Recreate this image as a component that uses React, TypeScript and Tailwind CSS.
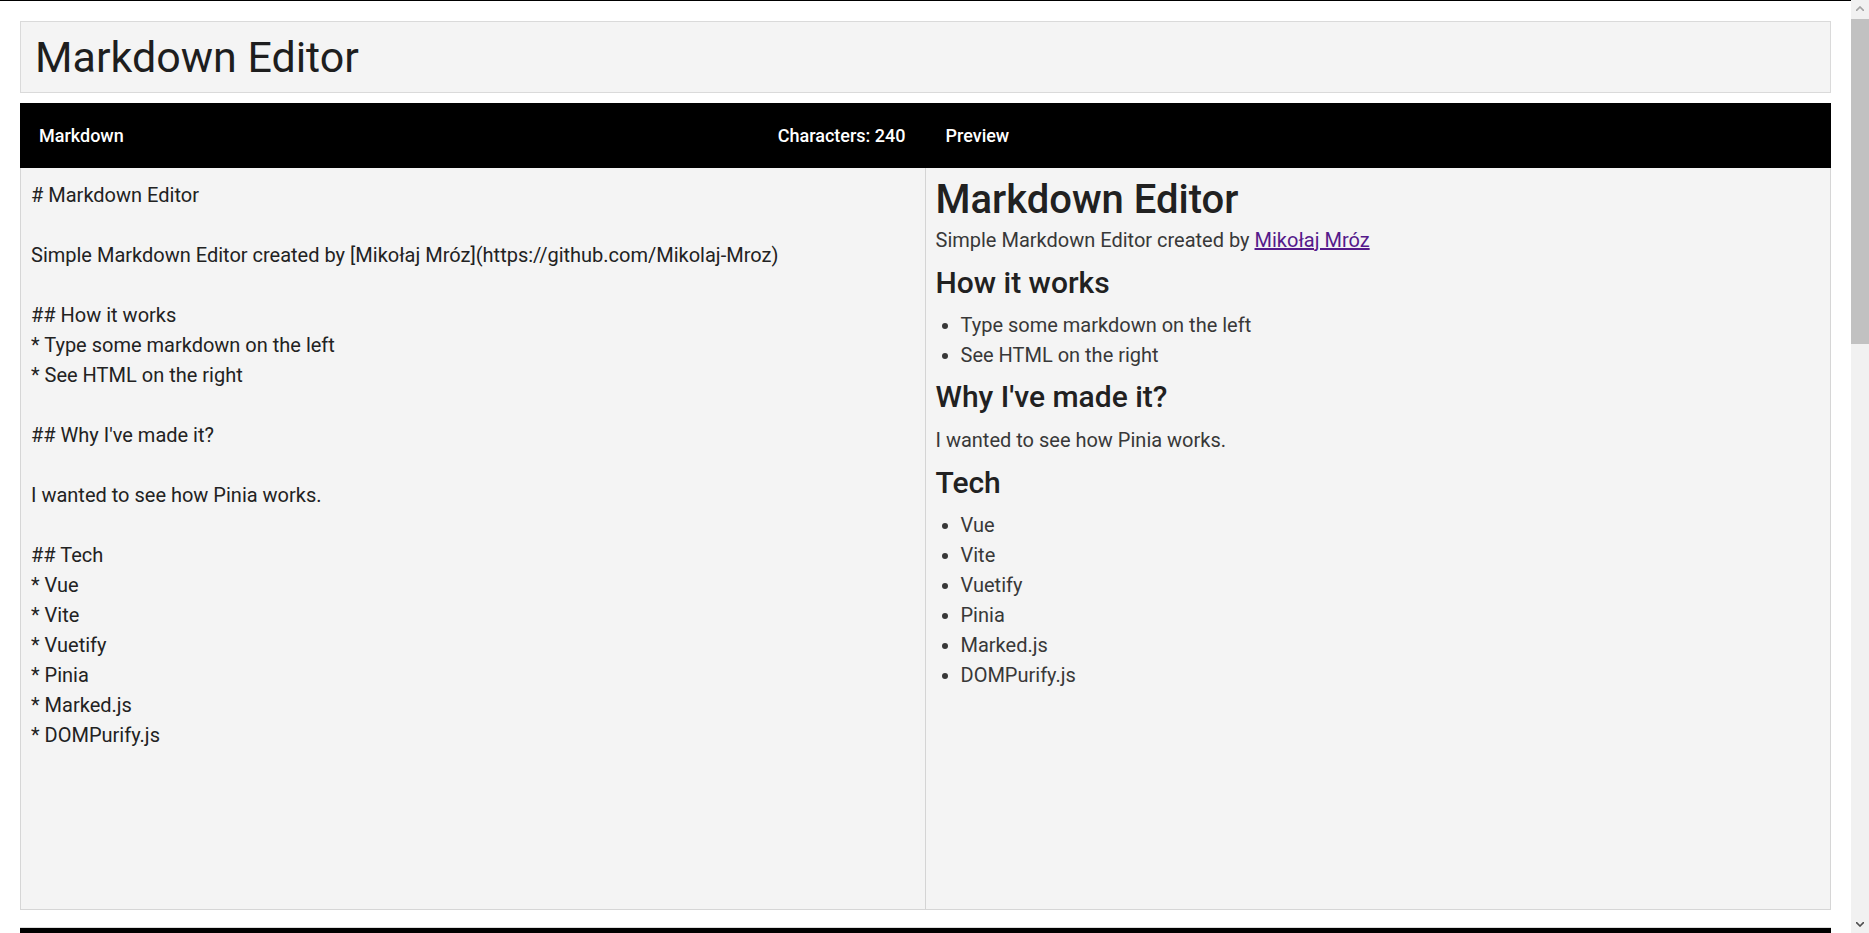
import React from 'react';

const source = `# Markdown Editor

Simple Markdown Editor created by [Mikołaj Mróz](https://github.com/Mikolaj-Mroz)

## How it works
* Type some markdown on the left
* See HTML on the right

## Why I've made it?

I wanted to see how Pinia works.

## Tech
* Vue
* Vite
* Vuetify
* Pinia
* Marked.js
* DOMPurify.js`;

const tech = ['Vue', 'Vite', 'Vuetify', 'Pinia', 'Marked.js', 'DOMPurify.js'];

const Preview: React.FC = () => (
  <div className="pl-[10px] pr-[10px] pt-[7px] text-[20px] leading-[30px] text-[#383838]">
    <h1 className="text-[40px] leading-[50px] font-medium text-[#212121]">Markdown Editor</h1>
    <p className="mb-[10px]">
      Simple Markdown Editor created by{' '}
      <a href="#" className="text-[#551a8b] underline">
        Mikołaj Mróz
      </a>
    </p>
    <h2 className="text-[30px] leading-[36px] font-medium text-[#212121] mb-[9px]">How it works</h2>
    <ul className="list-disc pl-[25px] mb-[9px]">
      <li>Type some markdown on the left</li>
      <li>See HTML on the right</li>
    </ul>
    <h2 className="text-[30px] leading-[36px] font-medium text-[#212121] mb-[10px]">Why I've made it?</h2>
    <p className="mb-[10px]">I wanted to see how Pinia works.</p>
    <h2 className="text-[30px] leading-[36px] font-medium text-[#212121] mb-[9px]">Tech</h2>
    <ul className="list-disc pl-[25px]">
      {tech.map((t) => (
        <li key={t}>{t}</li>
      ))}
    </ul>
  </div>
);

// page scrollbar, drawn since the browser hides its own
const Scrollbar: React.FC = () => (
  <div className="w-[18px] shrink-0 flex flex-col bg-[#f1f1f1]">
    <div className="h-[17px] flex items-center justify-center">
      <svg width="8" height="5" viewBox="0 0 8 5">
        <path d="M0 5 L4 1 L8 5" fill="none" stroke="#a3a3a3" strokeWidth="1.6" />
      </svg>
    </div>
    <div className="mt-[2px] h-[325px] bg-[#c1c1c1]" />
    <div className="flex-1" />
    <div className="h-[17px] flex items-center justify-center">
      <svg width="8" height="5" viewBox="0 0 8 5">
        <path d="M0 0 L4 4 L8 0" fill="none" stroke="#505050" strokeWidth="1.6" />
      </svg>
    </div>
  </div>
);

const App: React.FC = () => {
  return (
    <div className="h-[933px] flex overflow-hidden bg-white font-['Roboto',sans-serif]">
      <div className="flex-1 min-w-0 border-t border-black px-5 pt-5">
        <header className="h-[72px] flex items-center pl-[14px] bg-[#f4f4f4] border border-[#dadada]">
          <h1 className="text-[43px] leading-none text-[#1e1e1e]">Markdown Editor</h1>
        </header>

        <div className="mt-[10px] h-[65px] grid grid-cols-2 bg-black text-white text-[18px] font-medium">
          <div className="flex items-center justify-between pl-[19px] pr-5">
            <span>Markdown</span>
            <span>Characters: 240</span>
          </div>
          <div className="flex items-center px-5">
            <span>Preview</span>
          </div>
        </div>

        <div className="h-[742px] grid grid-cols-2 bg-[#f4f4f4] border-x border-b border-[#d6d6d6]">
          <div className="border-r border-[#d4d4d4] pl-[10px] pr-[10px] pt-[12px] pb-[10px]">
            <textarea
              className="w-full h-full resize-none bg-transparent outline-none text-[20px] leading-[30px] text-[#222222] font-['Roboto',sans-serif]"
              defaultValue={source}
              spellCheck={false}
            />
          </div>
          <Preview />
        </div>

        <footer className="mt-[17px] h-[65px] bg-black border-t border-[#dddddd]" />
      </div>
      <Scrollbar />
    </div>
  );
};

export default App;
